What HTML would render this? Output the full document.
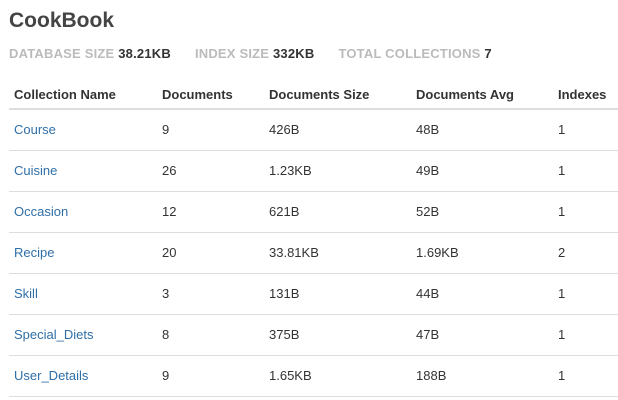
<!DOCTYPE html>
<html><head><meta charset="utf-8"><style>
body{margin:0;background:#fff;font-family:"Liberation Sans",sans-serif;color:#333;width:618px;height:400px;overflow:hidden;position:relative}
h1{position:absolute;left:9px;top:9px;margin:0;font-size:21px;font-weight:bold;color:#444}
.stats{position:absolute;left:9px;top:46px;font-size:13px;font-weight:bold;color:#bbb;white-space:nowrap;letter-spacing:0.2px}
.stats b{color:#333}
.stats span{margin-right:24px}
.hdr{position:absolute;left:9px;right:0;top:0;height:108px;border-bottom:2px solid #ddd}
.row{position:absolute;left:9px;right:0;height:40px;border-bottom:1px solid #ddd;font-size:13px}
.c{position:absolute;top:0}
.hdr .c{top:87px;font-weight:bold;font-size:13px;color:#333}
.row .c{top:12px}
a{color:#2f6fa7;text-decoration:none}
</style></head><body>
<h1>CookBook</h1>
<div class="stats"><span>DATABASE SIZE <b>38.21KB</b></span><span>INDEX SIZE <b>332KB</b></span><span>TOTAL COLLECTIONS <b>7</b></span></div>
<div class="hdr"><div class="c" style="left:5px">Collection Name</div><div class="c" style="left:153px">Documents</div><div class="c" style="left:260px">Documents Size</div><div class="c" style="left:407px">Documents Avg</div><div class="c" style="left:549px">Indexes</div></div>
<div class="row" style="top:110px"><div class="c" style="left:5px"><a>Course</a></div><div class="c" style="left:153px">9</div><div class="c" style="left:260px">426B</div><div class="c" style="left:407px">48B</div><div class="c" style="left:549px">1</div></div>
<div class="row" style="top:151px"><div class="c" style="left:5px"><a>Cuisine</a></div><div class="c" style="left:153px">26</div><div class="c" style="left:260px">1.23KB</div><div class="c" style="left:407px">49B</div><div class="c" style="left:549px">1</div></div>
<div class="row" style="top:192px"><div class="c" style="left:5px"><a>Occasion</a></div><div class="c" style="left:153px">12</div><div class="c" style="left:260px">621B</div><div class="c" style="left:407px">52B</div><div class="c" style="left:549px">1</div></div>
<div class="row" style="top:233px"><div class="c" style="left:5px"><a>Recipe</a></div><div class="c" style="left:153px">20</div><div class="c" style="left:260px">33.81KB</div><div class="c" style="left:407px">1.69KB</div><div class="c" style="left:549px">2</div></div>
<div class="row" style="top:274px"><div class="c" style="left:5px"><a>Skill</a></div><div class="c" style="left:153px">3</div><div class="c" style="left:260px">131B</div><div class="c" style="left:407px">44B</div><div class="c" style="left:549px">1</div></div>
<div class="row" style="top:315px"><div class="c" style="left:5px"><a>Special_Diets</a></div><div class="c" style="left:153px">8</div><div class="c" style="left:260px">375B</div><div class="c" style="left:407px">47B</div><div class="c" style="left:549px">1</div></div>
<div class="row" style="top:356px"><div class="c" style="left:5px"><a>User_Details</a></div><div class="c" style="left:153px">9</div><div class="c" style="left:260px">1.65KB</div><div class="c" style="left:407px">188B</div><div class="c" style="left:549px">1</div></div>
</body></html>
